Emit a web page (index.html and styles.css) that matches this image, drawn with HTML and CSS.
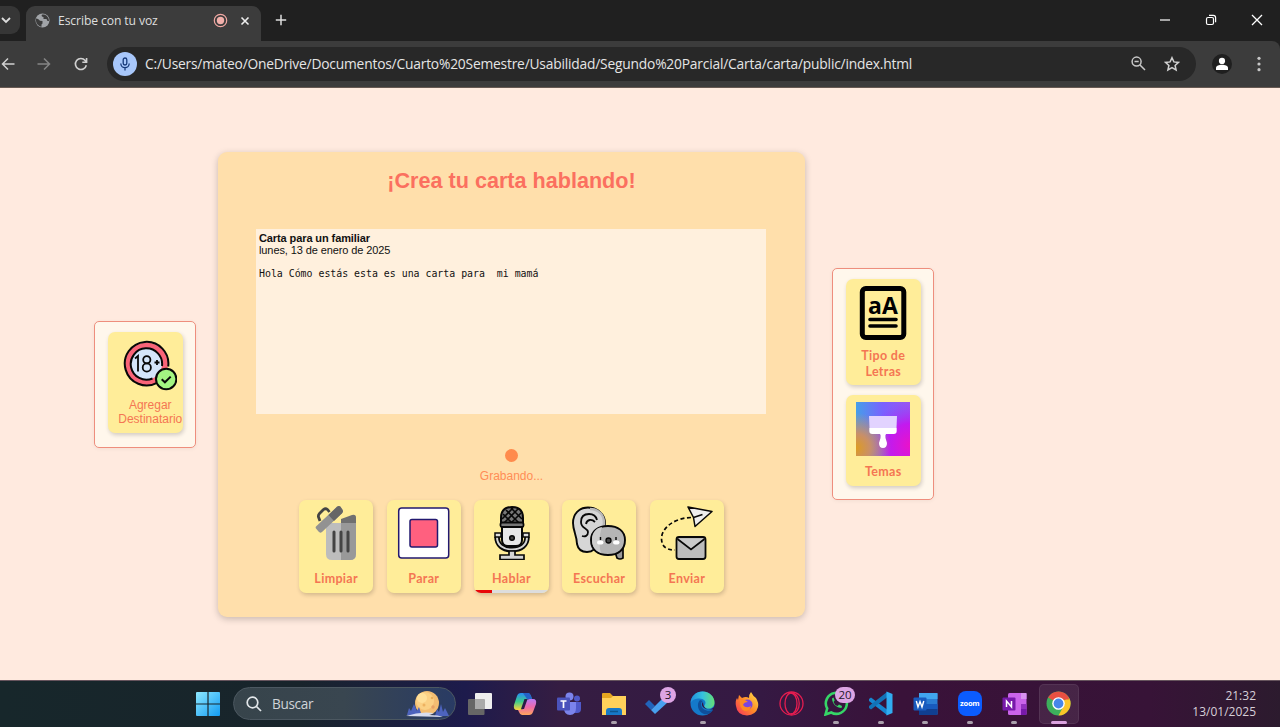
FILE: index.html
```html
<!DOCTYPE html>
<html lang="es">
<head>
<meta charset="utf-8">
<title>Escribe con tu voz</title>
<link rel="stylesheet" href="styles.css">
</head>
<body>
<div class="screen">
  <header class="tabstrip">
    <div class="tab-search"><svg width="10" height="8" viewBox="0 0 10 8" fill="none" stroke="#ddd" stroke-width="1.8"><path d="M1 2l4 4 4-4"/></svg></div>
    <div class="tab">
      <svg class="tab-globe" width="15" height="15" viewBox="0 0 15 15"><circle cx="7.500" cy="7.500" r="7" fill="#a1a4a8"/><path d="M1 5.500c2 .2 3 1.200 4 2.200l2.500.3v2.500l-1 1v2.200C3.500 13.300 1 10.500 1 7.500zM7 1.500C6 3 7 4 8.500 4v2h3l1 2h1.500c0-3.500-2.500-6-5-6.500z" fill="#3c3c3c"/></svg>
      <span class="tab-title">Escribe con tu voz</span>
      <svg class="tab-rec" width="15" height="15" viewBox="0 0 15 15"><circle cx="7.500" cy="7.500" r="6.200" fill="none" stroke="#f2a9a4" stroke-width="1.200"/><circle cx="7.500" cy="7.500" r="3.700" fill="#f2b0ab"/></svg>
      <svg width="10" height="10" viewBox="0 0 10 10" stroke="#eee" stroke-width="1.600"><path d="M1.500 1.500l7 7M8.500 1.500l-7 7"/></svg>
    </div>
    <svg class="new-tab" width="12" height="12" viewBox="0 0 12 12" stroke="#ddd" stroke-width="1.500"><path d="M6 .8v10.400M.8 6h10.400"/></svg>
    <div class="win-controls">
      <svg width="12" height="12" viewBox="0 0 12 12" stroke="#fff" stroke-width="1.200"><path d="M1 6h10"/></svg>
      <svg width="12" height="12" viewBox="0 0 12 12" fill="none" stroke="#fff" stroke-width="1.200"><rect x="1.500" y="3.500" width="7" height="7" rx="1.500"/><path d="M4 1.400h4.200a2.400 2.400 0 0 1 2.400 2.400V8.200"/></svg>
      <svg width="12" height="12" viewBox="0 0 12 12" stroke="#fff" stroke-width="1.300"><path d="M1 1l10 10M11 1L1 11"/></svg>
    </div>
  </header>
  <div class="toolbar">
    <svg class="nav-back" width="14" height="14" viewBox="0 0 14 14" fill="none" stroke="#d0d0d0" stroke-width="1.500"><path d="M13.500 7H1.500M7 1.500L1.500 7 7 12.500"/></svg>
    <svg class="nav-forward" width="14" height="14" viewBox="0 0 14 14" fill="none" stroke="#858585" stroke-width="1.500"><path d="M.5 7h12M7 1.500L12.500 7 7 12.500"/></svg>
    <svg class="nav-reload" width="14" height="14" viewBox="0 0 14 14" fill="none" stroke="#d0d0d0" stroke-width="1.600"><path d="M12.300 8.200A5.500 5.500 0 1 1 11.200 3.500L12.500 5M12.600 1v4.300H8.300"/></svg>
    <div class="omnibox">
      <span class="mic-chip"><svg width="12" height="14" viewBox="0 0 12 14" fill="none" stroke="#173a7a" stroke-width="1.300"><rect x="4.200" y="1" width="3.600" height="7" rx="1.800"/><path d="M1.800 6.500a4.200 4.200 0 0 0 8.400 0M6 10.700V13.500"/></svg></span>
      <span class="url">C:/Users/mateo/OneDrive/Documentos/Cuarto%20Semestre/Usabilidad/Segundo%20Parcial/Carta/carta/public/index.html</span>
      <svg width="15" height="15" viewBox="0 0 15 15" fill="none" stroke="#c8c8c8" stroke-width="1.500"><circle cx="5.600" cy="5.600" r="4.500"/><path d="M9 9l5 5M3.500 5.600h4.200"/></svg>
      <svg class="star" width="16" height="16" viewBox="0 0 16 16" fill="none" stroke="#d0d0d0" stroke-width="1.500"><path d="M8 1.700l1.900 4.200 4.600.5-3.400 3.100 1 4.500L8 11.700 3.900 14l1-4.500L1.500 6.400l4.600-.5z"/></svg>
    </div>
    <span class="profile"><svg width="14" height="14" viewBox="0 0 14 14" fill="#fff"><circle cx="7" cy="3.900" r="3.100"/><path d="M1 13v-2c0-2 3-3.200 6-3.200s6 1.200 6 3.200v2z"/></svg></span>
    <svg class="kebab" width="4" height="16" viewBox="0 0 4 16" fill="#c8c8c8"><circle cx="2" cy="2.300" r="1.600"/><circle cx="2" cy="8" r="1.600"/><circle cx="2" cy="13.700" r="1.600"/></svg>
  </div>

  <main class="page">
    <aside class="side side-left">
      <button class="btn btn-wide">
        <svg class="icon" viewBox="0 0 54 54"><circle cx="23.500" cy="25" r="21.500" fill="#fa6478"/><circle cx="23.500" cy="25" r="15.500" fill="#d4e5fa"/><path d="M34 43.800A21.800 21.800 0 1 1 45.200 27.500M29.500 39.500A15.700 15.700 0 1 1 39 27" fill="none" stroke="#080808" stroke-width="2"/><g fill="none" stroke="#080808" stroke-width="1.800"><path d="M12 19.500l3-2.500v15.500"/><circle cx="23.800" cy="20.800" r="3.600"/><circle cx="23.800" cy="28.500" r="4.100"/><path d="M31.500 23.500h5M34 21v5"/></g><circle cx="43.200" cy="40" r="10.200" fill="#a3f582" stroke="#080808" stroke-width="2"/><path d="M38.700 40.300l3.200 3 5.800-5.700" fill="none" stroke="#080808" stroke-width="2"/></svg>
        <span class="caption caption-plain">Agregar Destinatario</span>
      </button>
    </aside>

    <section class="card">
      <h1 class="title">¡Crea tu carta hablando!</h1>
      <div class="letter"><strong class="subject">Carta para un familiar</strong><span class="date">lunes, 13 de enero de 2025</span><span class="body-text">Hola Cómo estás esta es una carta para  mi mamá</span></div>
      <div class="recording"><i class="rec-dot"></i><span>Grabando...</span></div>
      <div class="actions">
        <button class="btn">
          <svg class="icon" viewBox="0 0 54 54"><path d="M17 17h30v31q0 6-6 6H23q-6 0-6-6z" fill="#bdbdbd"/><path d="M32 17h15v31q0 6-6 6h-9z" fill="#999"/><path d="M32 13l11-4q4-1 4 2.500V17H32z" fill="#707070"/><g stroke="#444" stroke-width="3" stroke-linecap="round"><path d="M25 26v19M32 26v19M39 26v19"/></g><path d="M7.500 20L28 .8q2-1.500 3.500 0l2 3q1 2-.5 3.500L13 26q-2 1.500-3.500-.5L7 22.500q-1-1 .5-2.500z" fill="#929292"/><path d="M19.500 9L28 .8q2-1.500 3.500 0l2 3q1 2-.5 3.500L25 15z" fill="#666"/><path d="M11 15l-1.500-4q-.5-2 1-3.500l4-4q2-1.500 4 0l2 2.500" fill="none" stroke="#444" stroke-width="2.800" stroke-linejoin="round"/></svg>
          <span class="caption">Limpiar</span>
        </button>
        <button class="btn">
          <svg class="icon" viewBox="0 0 54 54"><g stroke="#22186f" stroke-width="1.500"><rect x="1.700" y="2" width="50" height="50" rx="3" fill="#fff"/><rect x="13" y="13.500" width="27.500" height="27.500" rx="2" fill="#ff607f"/></g></svg>
          <span class="caption">Parar</span>
        </button>
        <button class="btn btn-progress">
          <svg class="icon" viewBox="0 0 54 54"><path d="M12 31c0 8 6 12.500 15 12.500S42 39 42 31" fill="none" stroke="#080808" stroke-width="5.500"/><path d="M12 31c0 8 6 12.500 15 12.500S42 39 42 31" fill="none" stroke="#d5d5d5" stroke-width="2"/><path d="M24 45h6v4h9v4.500H15V49h9z" fill="#d5d5d5" stroke="#080808" stroke-width="1.700"/><path d="M16 17v-5C16 4 20 1 27 1s11 3 11 11v5z" fill="#777" stroke="#080808" stroke-width="2"/><path d="M18 8l9 9M21 4l13 13M26 2l11 11M36 7L26 17M33 3L19 17M28 2L17 13" stroke="#080808" stroke-width="1.600"/><path d="M17 21h20v13q0 6-6 6h-8q-6 0-6-6z" fill="#e8e8e8" stroke="#080808" stroke-width="2"/><rect x="15.500" y="16.500" width="23" height="4.500" rx="1.500" fill="#777" stroke="#080808" stroke-width="1.800"/><path d="M10 27h6v4h-6zM38 27h6v4h-6z" fill="#ddd" stroke="#080808" stroke-width="1.500"/><circle cx="27" cy="32" r="2.300" fill="#444" stroke="#080808" stroke-width="1.500"/></svg>
          <span class="caption">Hablar</span>
          <span class="progress"><i class="progress-value"></i></span>
        </button>
        <button class="btn">
          <svg class="icon" viewBox="0 0 54 54"><path d="M5 38C5 30 1 25 1 17 1 8 7 1.500 16 1.500S33 8 33 17c0 9-8 12-9 20 0 6-3 9-9 9-6 0-9-3-10-8z" fill="#d6d6d6" stroke="#080808" stroke-width="1.900"/><path d="M18 3c9 0 14 6 14 14 0 9-8 12-9 20" fill="none" stroke="#b9b9b9" stroke-width="2.500"/><path d="M9 16c0-6 4-8 8-8s7 2 8 6M14 18c1-5 6-5 9-2M9 16c0 7 7 6 7 10s-3 5-6 4" fill="none" stroke="#080808" stroke-width="1.800"/><path d="M43 46l2 6q3 2 6 0V42z" fill="#999" stroke="#080808" stroke-width="1.700"/><path d="M19 34c0-9 7-14 17-14s17 5 17 14c0 10-7 15-17 15s-17-5-17-15z" fill="#b5b5b5" stroke="#080808" stroke-width="1.900"/><path d="M20 34c0-8 4-12 10-13-3 8-3 20-1 26-6-2-9-7-9-13z" fill="#cecece"/><rect x="25" y="34.500" width="6.500" height="4" rx="2" fill="#fff"/><rect x="41" y="34.500" width="6.500" height="4" rx="2" fill="#fff"/><path d="M28.500 31v3M44 31v3" stroke="#080808" stroke-width="1.400"/><circle cx="36.500" cy="34.500" r="2.500" fill="#444" stroke="#080808" stroke-width="1.300"/></svg>
          <span class="caption">Escuchar</span>
        </button>
        <button class="btn">
          <svg class="icon" viewBox="0 0 54 54"><path d="M28 1L52 5.500 35 20.500l-1.500-9z" fill="#eee" stroke="#080808" stroke-width="1.500" stroke-linejoin="round"/><path d="M33.500 11.500l9-3" stroke="#080808" stroke-width="1.500"/><path d="M31 11.500C14 12 2 22 1.500 32c0 8 4 12 13.500 12" fill="none" stroke="#080808" stroke-width="1.700" stroke-dasharray="4 2.600"/><rect x="16.500" y="31" width="29" height="22" rx="2.500" fill="#bcbcbc" stroke="#080808" stroke-width="1.800"/><path d="M17.500 33l13.500 10.500L44.500 33" fill="#cacaca" stroke="#080808" stroke-width="1.700"/></svg>
          <span class="caption">Enviar</span>
        </button>
      </div>
    </section>

    <aside class="side side-right">
      <button class="btn">
        <svg class="icon" viewBox="0 0 54 54"><rect x="6.300" y="2.500" width="41.500" height="49" rx="3.500" fill="none" stroke="#000" stroke-width="5"/><g stroke="#000" stroke-width="3.600" stroke-linecap="round"><path d="M14 33.500h26M14 40h26"/></g><text class="icon-letters" x="27" y="28" text-anchor="middle">aA</text></svg>
        <span class="caption">Tipo de Letras</span>
      </button>
      <button class="btn">
        <svg class="icon" viewBox="0 0 54 54"><defs><linearGradient id="hue"><stop offset="0" stop-color="#459fe8"/><stop offset=".5" stop-color="#7961ff"/><stop offset="1" stop-color="#9b55ef"/></linearGradient><radialGradient id="warm" cx="0" cy=".85" r=".65"><stop offset="0" stop-color="#de9c20"/><stop offset=".4" stop-color="#c98f68"/><stop offset="1" stop-color="#c98f68" stop-opacity="0"/></radialGradient><radialGradient id="pink" cx="1" cy=".8" r=".8"><stop offset="0" stop-color="#ea12c9"/><stop offset=".5" stop-color="#c714ee" stop-opacity=".9"/><stop offset="1" stop-color="#8a40ff" stop-opacity="0"/></radialGradient></defs><path d="M0 0h54v54H0z" fill="url(#hue)"/><path d="M0 0h54v54H0z" fill="url(#pink)"/><path d="M0 0h54v54H0z" fill="url(#warm)"/><path d="M13 14h28l-.5 12h-27z" fill="#e2d3ff"/><path d="M13.300 26h27.400v3q0 3-3 3H30q-1 1-.5 4l1.500 5q0 5-4 5t-4-5l1.500-5q.5-3-.5-4h-7.700q-3 0-3-3z" fill="#fff"/></svg>
        <span class="caption">Temas</span>
      </button>
    </aside>
  </main>

  <footer class="taskbar">
    <svg class="start" width="24" height="24" viewBox="0 0 24 24"><defs><linearGradient id="win" x1="0" y1="0" x2="1" y2="1"><stop offset="0" stop-color="#8ee8ff"/><stop offset="1" stop-color="#129bf3"/></linearGradient></defs><path d="M0 1q0-1 1-1h10.400v11.400H0zM12.600 0H23q1 0 1 1v10.400H12.600zM0 12.600h11.400V24H1q-1 0-1-1zM12.600 12.600H24V23q0 1-1 1H12.600z" fill="url(#win)"/></svg>
    <div class="search">
      <svg width="16" height="16" viewBox="0 0 16 16" fill="none" stroke="#e3e7ea" stroke-width="1.700"><circle cx="6.500" cy="6.500" r="5.300"/><path d="M10.500 10.500l4.500 4.500"/></svg>
      <span class="search-text">Buscar</span>
      <svg class="moon" width="44" height="28" viewBox="0 0 44 28"><circle cx="21" cy="13" r="12" fill="#f3bd72"/><circle cx="19" cy="11" r="9" fill="#fbd084"/><circle cx="16" cy="8" r="5" fill="#ffdf99"/><circle cx="18" cy="15" r="1.500" fill="#eeb260"/><circle cx="26" cy="8" r="1.300" fill="#e9ae58"/><circle cx="27" cy="17" r="1.700" fill="#e6a165"/><path d="M1 25l2-7 2 3 3-7 3 7 2-4 3 9zM29 26l2-7 2 3 2-8 2 8 2-4 4 8z" fill="#4d63bd"/><path d="M0 26q14-5 28-3l-5 2q10 0 14 2z" fill="#d7dcef"/></svg>
    </div>
    <nav class="apps">
      <span class="app"><svg width="26" height="24" viewBox="0 0 26 24"><rect x="8" y="1" width="17" height="16" rx="1" fill="#eee"/><rect x="1" y="7" width="16.500" height="16" rx="1" fill="#666"/><path d="M8 7h9.500v10H8z" fill="#aaa"/></svg></span>
      <span class="app"><svg width="24" height="24" viewBox="0 0 24 24"><defs><linearGradient id="copA" x1="0" y1="0" x2="0" y2="1"><stop offset="0" stop-color="#278cf4"/><stop offset=".5" stop-color="#3bcb8b"/><stop offset="1" stop-color="#ffd33d"/></linearGradient><linearGradient id="copB" x1="0" y1="0" x2="0" y2="1"><stop offset="0" stop-color="#b97bf5"/><stop offset=".5" stop-color="#ee69aa"/><stop offset="1" stop-color="#ffa55b"/></linearGradient></defs><path d="M8 1h7q2 0 3 3l1 3h-4l-4 8q-1 3-4 3H4q-4 0-3-5L4 4q1-3 4-3z" fill="url(#copA)"/><path d="M16 23H9q-2 0-3-3l-1-2h4l4-8q1-3 4-3h3q4 0 3 5l-3 8q-1 3-4 3z" fill="url(#copB)"/><path d="M11.500 7h3l-3.500 10H8z" fill="#281c45"/><path d="M10 1h5q2 0 3 3l1 3h-5z" fill="#2461c8"/></svg></span>
      <span class="app"><svg width="26" height="24" viewBox="0 0 26 24"><circle cx="13.500" cy="4.500" r="4" fill="#7b83eb"/><circle cx="21" cy="6.500" r="3" fill="#5059c9"/><path d="M17 10h8v7q0 4-4 4h-3z" fill="#5059c9"/><path d="M8 10h12v6q0 7-6 7t-6-7z" fill="#7b83eb"/><rect x="1" y="5.500" width="13" height="13" rx="1" fill="#4b53bc"/><path d="M4.500 9h6M7.500 9v7" stroke="#fff" stroke-width="1.700"/></svg></span>
      <span class="app running"><svg width="26" height="24" viewBox="0 0 26 24"><path d="M1 2q0-1 1-1h7l3 3h12q1 0 1 1v18H1z" fill="#e5a620"/><path d="M1 6h9l2-2h13v19H1z" fill="#ffd15a"/><path d="M5 23v-4q0-3 3-3h10q3 0 3 3v4z" fill="#1779c8"/><path d="M9 19.500h8" stroke="#0d568f" stroke-width="1.500"/></svg></span>
      <span class="app"><svg width="26" height="24" viewBox="0 0 26 24"><path d="M0 12l4-4 6 6-4 4z" fill="#2164bb"/><path d="M6 18L18 6l4.500 4.500L10 22z" fill="#48a0ee"/></svg><b class="badge">3</b></span>
      <span class="app running"><svg width="25" height="25" viewBox="0 0 25 25"><defs><linearGradient id="edge"><stop offset="0" stop-color="#218edb"/><stop offset=".5" stop-color="#35c1df"/><stop offset="1" stop-color="#65df75"/></linearGradient></defs><circle cx="12.500" cy="12.500" r="12" fill="#1479ca"/><path d="M.5 12C1 5 6 .5 12.500.5c8 0 12 6 12 11 0 4-3 6-6 6-4 0-5-1-4-3 3-4-1-7-5-7-4 0-7 1-9 4.500z" fill="url(#edge)"/><path d="M10 9c-4 4-2 12 4 14 4 1 7-1 9-4-5 2-12 0-12-6q0-2 2-3z" fill="#0f4f9b"/><path d="M13 11c-2 2-1 5 2 6.500 3 1.500 7 1 9-1.500v2.500H19q-6-1-6-7.500z" fill="#311543"/></svg></span>
      <span class="app"><svg width="24" height="24" viewBox="0 0 24 24"><defs><linearGradient id="fox" x1="1" y1="0" x2="0" y2="1"><stop offset="0" stop-color="#ffe34a"/><stop offset=".5" stop-color="#ff8b27"/><stop offset="1" stop-color="#f62b63"/></linearGradient></defs><path d="M4 3l3 3q4-2 7 0 0-4 2-6 2 4 5 6 3 5 2 9-2 8-11 8.500Q2 23 1 14 0 9 2 6l1 2z" fill="url(#fox)"/><circle cx="12.500" cy="12.500" r="5" fill="#7a45df"/><path d="M5 8q5-1 8 2-4 0-5 3 3 4 8 1-1 5-6 5-6-2-5-11z" fill="#ff8a23"/></svg></span>
      <span class="app"><svg width="25" height="25" viewBox="0 0 25 25" fill="none" stroke="#e51d50" stroke-width="1.300"><circle cx="12.500" cy="12.500" r="11.500"/><ellipse cx="12" cy="12.500" rx="6" ry="10.500"/><path d="M12 2c11 0 11 21 0 21"/></svg></span>
      <span class="app running"><svg width="25" height="25" viewBox="0 0 25 25" fill="none" stroke="#36d567"><path d="M1.500 23.500l1.700-6a10.500 10.500 0 1 1 4 4z" stroke-width="2.600"/><path d="M8 7.500c0 5 4.500 9.500 9.500 9.500l.5-2-3-1.500-1.500 1.500q-3-1-4-4l1.200-1.500L9.500 6.500z" fill="#36d567" stroke="none"/></svg><b class="badge badge-wide">20</b></span>
      <span class="app running"><svg width="25" height="25" viewBox="0 0 25 25"><path d="M1 8l2-1.500 16 12V24L1 10z" fill="#1687d1"/><path d="M1 17l2 1.500 16-12V1L1 15z" fill="#1272b7"/><path d="M18.500.5l6 2.500v19l-6 2.500z" fill="#31adf2"/></svg></span>
      <span class="app running"><svg width="25" height="24" viewBox="0 0 25 24"><rect x="6" y="1" width="18.500" height="22" rx="1.500" fill="#2b7cd3"/><path d="M6 1h18.500v6H6z" fill="#41a5ee"/><path d="M6 12h18.500v5H6z" fill="#185abd"/><path d="M6 17h18.500v6H6z" fill="#103f91"/><rect x=".5" y="5.500" width="13" height="13" rx="1" fill="#185abd"/><path d="M3.300 9l1.700 6 2-5.500L9 15l1.800-6" fill="none" stroke="#fff" stroke-width="1.400"/></svg></span>
      <span class="app running"><span class="zoom">zoom</span></span>
      <span class="app running"><svg width="25" height="24" viewBox="0 0 25 24"><rect x="6" y="1" width="18.500" height="22" rx="1.500" fill="#ca64ea"/><path d="M19 1h5.500v6H19z" fill="#d992f0"/><path d="M19 12h5.500v5H19z" fill="#9332bf"/><path d="M19 17h5.500v6H19z" fill="#7719aa"/><rect x=".5" y="5.500" width="13" height="13" rx="1" fill="#7719aa"/><path d="M4.500 15V9l5 6V9" fill="none" stroke="#fff" stroke-width="1.500"/></svg></span>
      <span class="app running active"><svg width="25" height="25" viewBox="0 0 25 25"><circle cx="12.500" cy="12.500" r="12" fill="#2da94f"/><path d="M12.500 12.500L2.100 6.500A12 12 0 0 1 22.900 6.500z" fill="#e84132"/><path d="M12.500 12.500L22.900 6.500A12 12 0 0 1 12.500 24.500l6-11z" fill="#fbc116"/><path d="M12.500 6.500h10.400v2H12z" fill="#e84132"/><circle cx="12.500" cy="12.500" r="6.300" fill="#fff"/><circle cx="12.500" cy="12.500" r="4.900" fill="#377de8"/></svg></span>
    </nav>
    <div class="clock"><span>21:32</span><span>13/01/2025</span></div>
  </footer>
</div>
</body>
</html>
```

FILE: styles.css
```css
* { box-sizing: border-box; }
body { margin: 0; font-family: "Liberation Sans", Arial, sans-serif; }
svg { display: block; flex: none; }
.screen { width: 1280px; height: 727px; display: flex; flex-direction: column; overflow: hidden; background: #202020; }

.tabstrip { height: 41px; flex: none; display: flex; align-items: center; padding-bottom: 1px; background: #202020; }
.tab-search { width: 20px; height: 28px; display: flex; align-items: center; padding-left: 1px; background: #363636; border-radius: 0 9px 9px 0; }
.tab { width: 235px; height: 35px; margin: 7px 0 0 6px; padding: 0 11px 6px 9px; display: flex; align-items: center; background: #3c3c3c; border-radius: 9px 9px 0 0; }
.tab-title { flex: 1; margin-left: 8px; font: 12.200px "Open Sans", "Noto Sans", sans-serif; letter-spacing: -.12px; color: #dedede; white-space: nowrap; }
.tab-rec { margin-right: 12px; }
.new-tab { margin-left: 14px; }
.win-controls { display: flex; gap: 34px; margin-left: auto; margin-right: 17px; }

.toolbar { height: 47px; flex: none; display: flex; align-items: center; padding: 0 0 1px 1px; background: #3c3c3c; border-bottom: 1px solid #675952; border-radius: 0 8px 0 0; }
.nav-forward { margin-left: 22px; }
.nav-reload { margin-left: 23px; }
.omnibox { width: 1089px; height: 34px; flex: none; margin-left: 19px; padding: 0 16px 0 6px; display: flex; align-items: center; background: #282828; border-radius: 17px; }
.mic-chip { width: 24px; height: 24px; display: flex; align-items: center; justify-content: center; background: #a8c7fa; border-radius: 50%; }
.url { flex: 1; margin-left: 8px; font: 13.800px "Open Sans", "Noto Sans", sans-serif; letter-spacing: -.2px; color: #e5e5e5; white-space: nowrap; }
.star { margin-left: 18px; }
.profile { width: 20px; height: 20px; margin-left: 16px; display: flex; align-items: center; justify-content: center; background: #1f1f1f; border-radius: 50%; }
.kebab { margin-left: 25px; }

.page { height: 592px; flex: none; display: flex; align-items: center; padding-left: 94px; background: #ffeadf; }
.side { width: 102px; padding: 10px 13px 13px; display: flex; flex-direction: column; gap: 10px; background: #fff7ec; border: 1px solid #ee8e7d; border-radius: 5px; box-shadow: 0 1px 4px #0000000d; }
.side-left { height: 127px; }
.side-right { height: 232px; margin-left: 27px; }
.card { width: 587px; height: 465px; margin-left: 22px; display: flex; flex-direction: column; align-items: center; background: #ffdfab; border-radius: 9px; box-shadow: 0 2px 7px #00000038; }
.title { margin: 15px 0 0; font-size: 21.600px; line-height: 28px; color: #fb705f; white-space: nowrap; }
.letter { width: 510px; height: 185px; margin: 34px 1px 0 0; padding: 3px; display: flex; flex-direction: column; background: #fff0dd; font-size: 11px; line-height: 12px; letter-spacing: -.1px; color: #111; }
.body-text { margin-top: 12px; font-family: "DejaVu Sans Mono", monospace; font-size: 9.900px; letter-spacing: 0; white-space: pre; }
.recording { margin-top: 35px; height: 35px; display: flex; flex-direction: column; align-items: center; gap: 7px; color: #ff8d56; font-size: 12px; line-height: 14px; }
.rec-dot { width: 13px; height: 13px; border-radius: 50%; background: #ff8b4d; }
.actions { margin-top: 16px; display: flex; gap: 13.200px; }
.btn { position: relative; width: 74.500px; padding: 6px 5px; display: flex; flex-direction: column; align-items: center; border: 0; border-radius: 7px; background: #ffed99; box-shadow: 1px 2px 4px #0000002e; color: #f47653; overflow: hidden; }
.icon { width: 54px; height: 54px; }
.caption { margin-top: 11px; font: bold 12.500px/16px "Lato", "Noto Sans", sans-serif; letter-spacing: .3px; text-align: center; }
.side .btn { padding-top: 7px; }
.side .btn-wide { padding: 7px 0 6px 10px; height: 101px; overflow: visible; }
.side .caption { margin-top: 8px; }
.side .caption-plain { margin-top: 5px; font: 12px/14px "Liberation Sans", Arial, sans-serif; letter-spacing: 0; }
.icon-letters { font: bold 23px "Open Sans", sans-serif; fill: #000; }
.progress { position: absolute; left: 0; right: 0; bottom: 0; height: 3px; background: #ddd; }
.progress-value { display: block; width: 18px; height: 3px; background: #e80808; }

.taskbar { height: 47px; flex: none; display: flex; align-items: center; padding: 0 0 1px 196px; border-top: 1px solid #66545d; background: linear-gradient(90deg, #17272b 0, #18242b 300px, #1d1b4c 465px, #351d42 560px, #351943 760px, #391239 900px, #371337 1150px, #2c1b2e 1280px); }
.search { width: 223px; height: 33px; margin-left: 13px; padding: 0 5px 0 12px; display: flex; align-items: center; background: linear-gradient(90deg, #37444b, #394650 50%, #293b64); border: 1px solid #4c5861; border-radius: 17px; }
.search-text { flex: 1; margin-left: 10px; font: 13.600px "Open Sans", "Noto Sans", sans-serif; letter-spacing: -.35px; color: #cfd4d9; }
.apps { display: flex; margin-left: 2px; }
.app { position: relative; width: 44.500px; height: 40px; display: flex; align-items: center; justify-content: center; }
.running::after { content: ""; position: absolute; left: 19px; bottom: 0; width: 6px; height: 3px; border-radius: 2px; background: #aaa0ac; }
.active::before { content: ""; position: absolute; inset: 0 2px; background: #ffffff14; border: 1px solid #ffffff12; border-radius: 5px; }
.active::after { left: 14px; width: 16px; background: #dba2df; }
.badge { position: absolute; left: 24px; top: 3px; width: 16px; height: 16px; border-radius: 8px; background: #dda5e4; color: #25162a; font: 11.500px/16px "Open Sans", sans-serif; text-align: center; }
.badge-wide { left: 21px; width: 20px; }
.zoom { width: 24px; height: 25px; border-radius: 8px; background: #0b5cff; color: #fff; font: bold 7.500px/24px "Open Sans", sans-serif; letter-spacing: -.2px; text-align: center; }
.clock { margin-left: auto; margin-right: 24px; display: flex; flex-direction: column; align-items: flex-end; font: 12px/16px "Open Sans", "Noto Sans", sans-serif; letter-spacing: 0; color: #d6cfd8; }
```
